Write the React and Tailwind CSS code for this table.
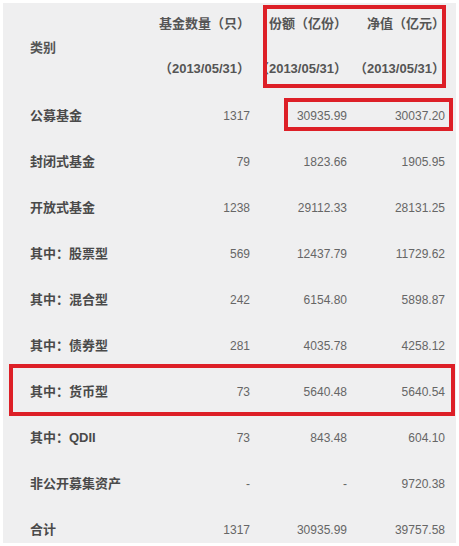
import React from "react";

const rows = [
  ["公募基金", "1317", "30935.99", "30037.20"],
  ["封闭式基金", "79", "1823.66", "1905.95"],
  ["开放式基金", "1238", "29112.33", "28131.25"],
  ["其中：股票型", "569", "12437.79", "11729.62"],
  ["其中：混合型", "242", "6154.80", "5898.87"],
  ["其中：债券型", "281", "4035.78", "4258.12"],
  ["其中：货币型", "73", "5640.48", "5640.54"],
  ["其中：QDII", "73", "843.48", "604.10"],
  ["非公开募集资产", "-", "-", "9720.38"],
  ["合计", "1317", "30935.99", "39757.58"],
];

const font = { fontFamily: '"Liberation Sans", "Noto Sans CJK SC", sans-serif' };

export default function App() {
  return (
    <div className="relative w-[459px] h-[546px] bg-white overflow-hidden" style={font}>
      <div className="absolute inset-0 p-[3px]">
        <div className="h-[540px] bg-[#efeff0] overflow-hidden pl-[27px]">
          <div className="grid grid-cols-[130px_90px_97px_98px] h-[90px] text-[13px] font-bold text-[#555]">
            <div className="flex items-center">类别</div>
            {["基金数量（只）", "份额（亿份）", "净值（亿元）"].map((h) => (
              <div key={h} className="flex flex-col justify-between items-end pt-[11px] pb-[14px] leading-[20px] whitespace-nowrap">
                <div>{h}</div>
                <div>（2013/05/31）</div>
              </div>
            ))}
          </div>
          {rows.map((r) => (
            <div key={r[0]} className="grid grid-cols-[130px_90px_97px_98px] h-[46px] items-center">
              <div className="text-[13px] font-bold text-[#4a4a4a] whitespace-nowrap">{r[0]}</div>
              <div className="text-[12px] text-[#666] text-right">{r[1]}</div>
              <div className="text-[12px] text-[#666] text-right">{r[2]}</div>
              <div className="text-[12px] text-[#666] text-right">{r[3]}</div>
            </div>
          ))}
        </div>
      </div>
      <div className="absolute left-[263px] top-[5px] w-[183px] h-[83px] border-[4px] border-[#dd1f27]" />
      <div className="absolute left-[284px] top-[98px] w-[169px] h-[33px] border-[4px] border-[#dd1f27]" />
      <div className="absolute left-[9px] top-[364px] w-[446px] h-[52px] border-[4px] border-[#dd1f27]" />
    </div>
  );
}
